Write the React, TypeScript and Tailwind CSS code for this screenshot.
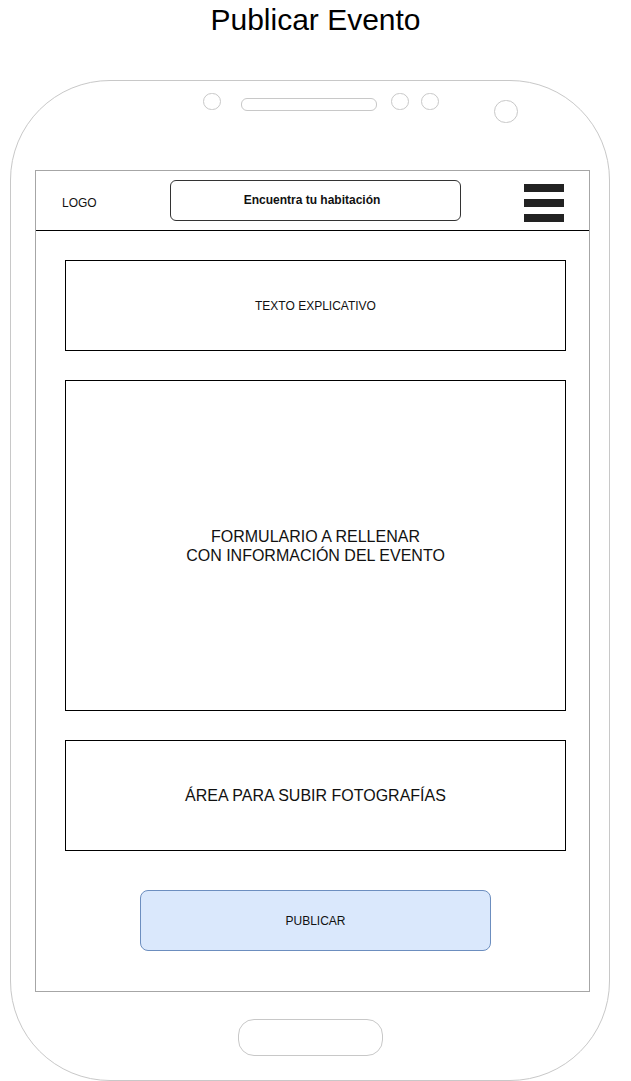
import React from "react";

export default function App() {
  return (
    <div
      className="w-[631px] h-[1081px] bg-white overflow-hidden text-[#111]"
      style={{ fontFamily: '"Liberation Sans", Arial, sans-serif' }}
    >
      <div className="h-[40px] flex items-center justify-center text-[30px] leading-none text-black">
        Publicar Evento
      </div>
      <div className="mt-[40px] ml-[10px] w-[600px] h-[1001px] border border-[#c8c8c8] rounded-[100px] flex flex-col">
        {/* top ornaments */}
        <div className="h-[89px] flex items-start">
          <div className="ml-[192px] mt-[12px] w-[18px] h-[17px] rounded-full border border-[#c8c8c8]" />
          <div className="ml-[20px] mt-[17px] w-[136px] h-[13px] rounded-[6px] border border-[#c8c8c8]" />
          <div className="ml-[14px] mt-[12px] w-[18px] h-[17px] rounded-full border border-[#c8c8c8]" />
          <div className="ml-[12px] mt-[12px] w-[18px] h-[17px] rounded-full border border-[#c8c8c8]" />
          <div className="ml-[55px] mt-[19px] w-[24px] h-[23px] rounded-full border border-[#c8c8c8]" />
        </div>
        {/* screen */}
        <div className="ml-[24px] w-[555px] h-[822px] border border-[#a6a6a6] flex flex-col">
          <div className="h-[60px] border-b border-black flex items-center">
            <div className="w-[134px] pl-[26px] text-[12px] pt-[4px]">LOGO</div>
            <div className="w-[291px] h-[41px] border border-[#333] rounded-[6px] flex items-center justify-center pr-[7px] pb-[2px] text-[12px] font-semibold text-[#111]">
              Encuentra tu habitación
            </div>
            <div className="ml-[63px] mt-[4px] w-[40px] flex flex-col gap-[7px]">
              <div className="h-[8px] bg-[#222]" />
              <div className="h-[8px] bg-[#222]" />
              <div className="h-[8px] bg-[#222]" />
            </div>
          </div>
          <div className="flex flex-col pl-[29px] pt-[29px]">
            <div className="w-[501px] h-[91px] border border-black flex items-center justify-center text-[12px]">
              TEXTO EXPLICATIVO
            </div>
            <div className="mt-[29px] w-[501px] h-[331px] border border-black flex items-center justify-center text-center text-[16px] leading-[19px]">
              FORMULARIO A RELLENAR
              <br />
              CON INFORMACIÓN DEL EVENTO
            </div>
            <div className="mt-[29px] w-[501px] h-[111px] border border-black flex items-center justify-center text-[16px]">
              ÁREA PARA SUBIR FOTOGRAFÍAS
            </div>
            <div className="mt-[39px] ml-[75px] w-[351px] h-[61px] bg-[#dae8fc] border border-[#6c8ebf] rounded-[8px] flex items-center justify-center text-[12px]">
              PUBLICAR
            </div>
          </div>
        </div>
        {/* home button */}
        <div className="ml-[227px] mt-[27px] w-[145px] h-[37px] rounded-[16px] border border-[#c8c8c8]" />
      </div>
    </div>
  );
}
